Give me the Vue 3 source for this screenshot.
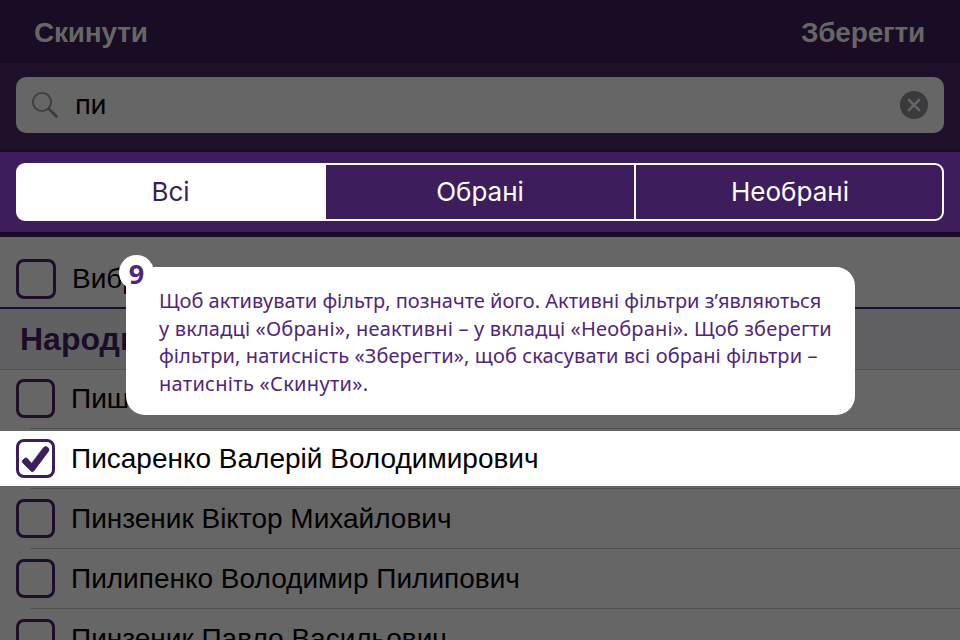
<script setup>
const tabs = [
  { label: 'Всі', active: true },
  { label: 'Обрані', active: false },
  { label: 'Необрані', active: false },
]

const people = [
  { name: 'Пиш', checked: false },
  { name: 'Писаренко Валерій Володимирович', checked: true },
  { name: 'Пинзеник Віктор Михайлович', checked: false },
  { name: 'Пилипенко Володимир Пилипович', checked: false },
  { name: 'Пинзеник Павло Васильович', checked: false },
]

const hint = [
  'Щоб активувати фільтр, позначте його. Активні фільтри з’являються',
  'у вкладці «Обрані», неактивні – у вкладці «Необрані». Щоб зберегти',
  'фільтри, натисність «Зберегти», щоб скасувати всі обрані фільтри –',
  'натисніть «Скинути».',
]
</script>

<template>
  <main class="screen">
    <header class="bar">
      <span class="reset">Скинути</span>
      <span class="save">Зберегти</span>
    </header>

    <section class="search">
      <div class="field">
        <svg class="lens" width="28" height="28" viewBox="0 0 28 28">
          <circle cx="11" cy="11" r="9.1" fill="none" stroke="#3d3d3f" stroke-width="1.9" />
          <path d="M17.6 17.7L25.6 25.5" stroke="#3a3a3c" stroke-width="2.6" stroke-linecap="round" />
        </svg>
        <span class="query">пи</span>
        <svg class="clear" width="28" height="28" viewBox="0 0 28 28">
          <circle cx="14" cy="14" r="14" fill="#3a3a3c" />
          <path d="M8.9 8.9L19.1 19.1M19.1 8.9L8.9 19.1" stroke="#666" stroke-width="2.5" stroke-linecap="round" />
        </svg>
      </div>
    </section>

    <nav class="tabs">
      <div class="segments">
        <div v-for="t in tabs" :key="t.label" class="segment" :class="{ active: t.active }">{{ t.label }}</div>
      </div>
    </nav>

    <div class="row all">
      <span class="box large"></span>
      <span class="name">Вибр</span>
    </div>
    <h2 class="group">Народн</h2>
    <div v-for="p in people" :key="p.name" class="row" :class="{ lit: p.checked }">
      <span class="box">
        <svg v-if="p.checked" width="39" height="39" viewBox="0 0 39 39">
          <path d="M6.5 23.6Q5.4 21.8 7.3 20.6L8.8 19.3Q10.3 18.3 11.6 19.8L15.6 24.4L27.4 8.8Q29.3 6.6 31.6 8.2Q34 10 32.4 12.4L17.8 31.9Q16.4 33.4 14.9 32Z" fill="#3e1d5c" stroke="#3e1d5c" stroke-width="0.8" />
        </svg>
      </span>
      <span class="name">{{ p.name }}</span>
    </div>

    <aside class="hint">
      <span class="badge">9</span>
      <p v-for="(line, i) in hint" :key="i" class="line" :class="'line' + i">{{ line }}</p>
    </aside>
  </main>
</template>

<style>
body {
  margin: 0;
  overflow: hidden;
}
</style>

<style scoped>
.screen {
  position: relative;
  width: 960px;
  height: 640px;
  overflow: hidden;
  background: #666;
  color: #000;
  font-family: "Liberation Sans", Arial, sans-serif;
}
.bar {
  display: flex;
  justify-content: space-between;
  box-sizing: border-box;
  height: 62px;
  padding: 0 35px 0 34px;
  border-bottom: 1px solid #12081a;
  background: #190c25;
  color: #666;
  font-size: 28px;
  font-weight: 700;
  line-height: 65px;
  letter-spacing: -0.2px;
}
.search {
  box-sizing: border-box;
  height: 90px;
  padding: 15px 16px 0;
  border-bottom: 3px solid #190c25;
  background: #1e1028;
}
.field {
  display: flex;
  align-items: center;
  box-sizing: border-box;
  height: 56px;
  padding: 0 16px 0 15px;
  border-radius: 10px;
  background: #666;
}
.query {
  flex: 1;
  margin-left: 16px;
  padding-bottom: 2px;
  font-family: Inter, sans-serif;
  font-size: 27px;
  letter-spacing: -0.3px;
}
.tabs {
  box-sizing: border-box;
  height: 85px;
  padding: 11px 16px 0;
  border-bottom: 5px solid #190c25;
  background: #3e1d5c;
}
.segments {
  display: grid;
  grid-template-columns: 308px 310px 306px;
  box-sizing: border-box;
  height: 58px;
  border: 2px solid #fff;
  border-radius: 9px;
}
.segment {
  color: #fff;
  font-family: Inter, sans-serif;
  font-size: 26px;
  line-height: 54px;
  text-align: center;
}
.segment:nth-child(2) {
  border-right: 2px solid #fff;
}
.segment:nth-child(3) {
  padding-left: 2px;
}
.segment.active {
  padding-right: 3px;
  border-radius: 7px 0 0 7px;
  background: #fff;
  background-clip: padding-box;
  box-shadow: -1px 0 0 #fff;
  color: #3e1d5c;
  box-sizing: border-box;
}
.row {
  position: relative;
  display: flex;
  align-items: flex-start;
  box-sizing: border-box;
  height: 60px;
  padding: 10px 16px 0;
}
.row::after {
  content: "";
  position: absolute;
  right: 0;
  bottom: 0;
  left: 30px;
  height: 1px;
  background: #505052;
}
.row.all {
  height: 72px;
  padding-top: 22px;
  border-bottom: 2px solid #1e0e2e;
}
.row.all::after {
  display: none;
}
.group + .row {
  height: 59px;
  padding-top: 9px;
}
.row.lit {
  background: linear-gradient(#666 2px, #fff 2px, #fff 57px, #666 57px);
}
.box {
  flex: none;
  box-sizing: border-box;
  width: 39px;
  height: 39px;
  border: 3px solid #1e0e2c;
  border-radius: 8px;
}
.box.large {
  width: 40px;
  height: 40px;
}
.lit .box {
  border-color: #3e1d5c;
}
.box svg {
  display: block;
  margin: -3px;
}
.name {
  margin-left: 16px;
  font-size: 28px;
  line-height: 40px;
  white-space: nowrap;
}
.group {
  box-sizing: border-box;
  height: 61px;
  margin: 0;
  padding-left: 20px;
  border-bottom: 1px solid #505052;
  background: #616163;
  color: #1b0c28;
  font-size: 32px;
  line-height: 60px;
}
.hint {
  position: absolute;
  top: 267px;
  left: 126px;
  box-sizing: border-box;
  width: 729px;
  height: 148px;
  padding: 20px 0 0 33px;
  border-radius: 19px;
  background: #fff;
  color: #4f267b;
  font-family: "Noto Sans", sans-serif;
  font-size: 20px;
}
.line {
  width: max-content;
  margin: 0;
  line-height: 27.5px;
  white-space: nowrap;
}
.line1 {
  letter-spacing: 0.17px;
}
.line2 {
  letter-spacing: 0.11px;
}
.line3 {
  letter-spacing: 0.3px;
}
.badge {
  position: absolute;
  top: -12px;
  left: -7px;
  width: 35px;
  height: 35px;
  border-radius: 50%;
  background: #fff;
  font-size: 27px;
  font-weight: 700;
  line-height: 37px;
  text-align: center;
}
</style>
